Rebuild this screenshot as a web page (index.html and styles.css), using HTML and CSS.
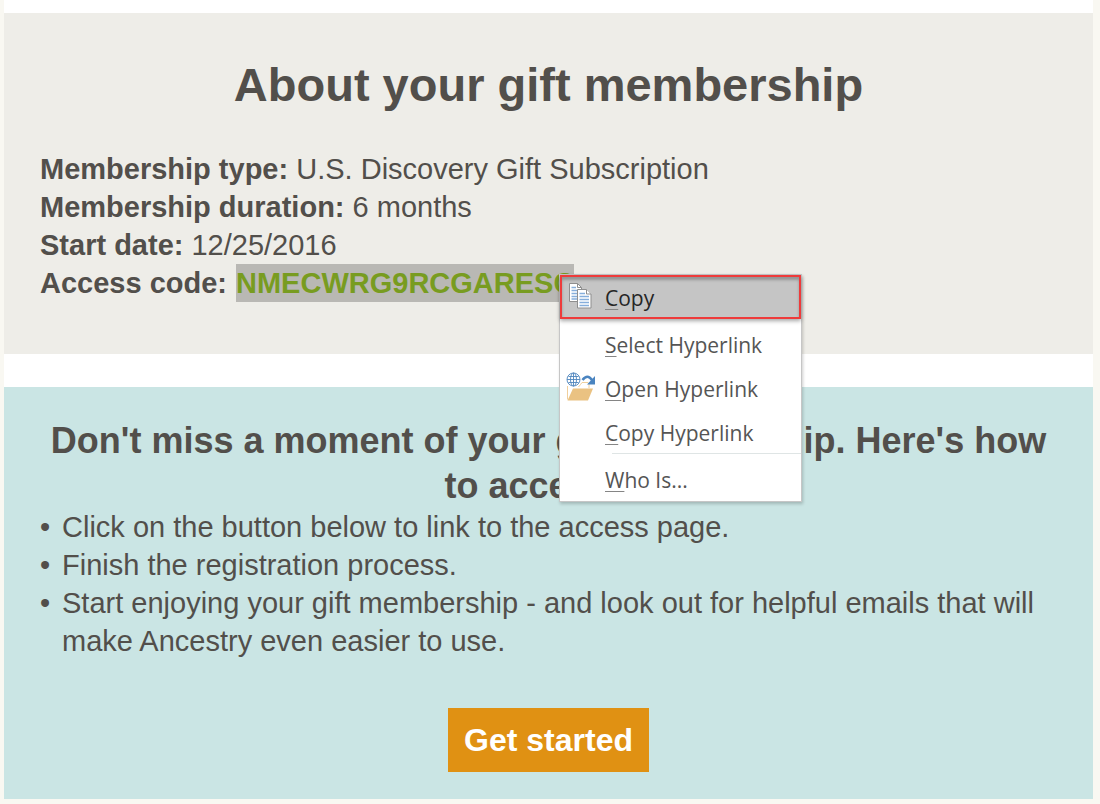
FILE: index.html
```html
<!DOCTYPE html>
<html lang="en">
<head>
    <meta charset="UTF-8">
    <meta name="viewport" content="width=device-width, initial-scale=1.0">
    <title>Your gift membership</title>
    <link rel="stylesheet" href="styles.css">
</head>
<body>
    <main class="email">
        <section class="details">
            <h1>About your gift membership</h1>
            <p><strong>Membership type:</strong> U.S. Discovery Gift Subscription</p>
            <p><strong>Membership duration:</strong> 6 months</p>
            <p><strong>Start date:</strong> 12/25/2016</p>
            <div class="code-row">
                <strong>Access code:</strong>
                <div class="code-wrap">
                    <a class="code" href="#">NMECWRG9RCGARESC</a>

                    <div class="menu" role="menu">
                        <button class="menu-item active" type="button" role="menuitem">
                            <svg class="icon" viewBox="0 0 30 30" aria-hidden="true">
                                <path d="M3.500 2.500h8l4 4v14h-12z" fill="#fff" stroke="#8f8f8f"/>
                                <path d="M11.500 2.500v4h4" fill="none" stroke="#8f8f8f"/>
                                <path d="M5.500 6.500h4.500M5.500 9.500h6M5.500 12.500h6M5.500 15.500h6M5.500 18h6" stroke="#86aedb" stroke-width="1.400"/>
                                <path d="M11.500 8.500h9l4.500 4.500v14h-13.500z" fill="#fff" stroke="#8f8f8f"/>
                                <path d="M20.500 8.500v4.500h4.500" fill="#fff" stroke="#8f8f8f"/>
                                <path d="M13.500 12.500h5.500M13.500 15.500h9.500M13.500 18.500h9.500M13.500 21.500h9.500M13.500 24.500h9.500" stroke="#86aedb" stroke-width="1.400"/>
                            </svg>
                            <span><u>C</u>opy</span>
                        </button>
                        <button class="menu-item" type="button" role="menuitem">
                            <span><u>S</u>elect Hyperlink</span>
                        </button>
                        <button class="menu-item" type="button" role="menuitem">
                            <svg class="icon" viewBox="0 0 30 30" aria-hidden="true">
                                <path d="M1.500 27.500V14M12.500 15l2-2.500 1.500-2h6l1 1.500v4" fill="none" stroke="#f0cf9c"/>
                                <path d="M7 16.500h20l-5 12H1.500z" fill="#eac282"/>
                                <g fill="#fff" stroke="#4f86bd" stroke-width="0.900">
                                    <circle cx="7.500" cy="7.500" r="6.500"/>
                                    <ellipse cx="7.500" cy="7.500" rx="3" ry="6.500"/>
                                    <path d="M7.500 1v13M1 7.500h13M2.500 4.500h10M2.500 10.500h10" fill="none"/>
                                </g>
                                <path d="M16.500 8q5-6.500 9.500 0" fill="none" stroke="#4a84c0" stroke-width="2.600"/>
                                <path d="M29 4v8.500h-8z" fill="#4a84c0"/>
                            </svg>
                            <span><u>O</u>pen Hyperlink</span>
                        </button>
                        <button class="menu-item" type="button" role="menuitem">
                            <span><u>C</u>opy Hyperlink</span>
                        </button>
                        <hr>
                        <button class="menu-item" type="button" role="menuitem">
                            <span><u>W</u>ho Is...</span>
                        </button>
                    </div>
                </div>
            </div>
        </section>

        <section class="steps">
            <h2>Don't miss a moment of your gift membership. Here's how to access it:</h2>
            <ul>
                <li>Click on the button below to link to the access page.</li>
                <li>Finish the registration process.</li>
                <li>Start enjoying your gift membership - and look out for helpful emails that will make Ancestry even easier to use.</li>
            </ul>
            <a class="btn" href="#">Get started</a>
        </section>
    </main>
</body>
</html>
```
FILE: styles.css
```css
* {
    margin: 0;
    padding: 0;
    box-sizing: border-box;
}

body {
    font-family: 'Liberation Sans', Arial, sans-serif;
    font-size: 29px;
    line-height: 38px;
    color: #524f4b;
    background-color: #f9f8f2;
}

.email {
    margin: 0 7px 4px 4px;
    padding-top: 13px;
    background-color: #ffffff;
}

.details {
    padding: 42px 36px 52px;
    background-color: #eeede8;
}

h1 {
    margin-bottom: 35px;
    font-size: 47px;
    line-height: 60px;
    text-align: center;
}

.code-row {
    display: flex;
    gap: 9px;
}

.code-wrap {
    position: relative;
}

.code {
    display: block;
    background-color: #b9b8b4;
    color: #789c20;
    font-weight: bold;
    text-decoration: none;
}

/* Context menu */
.menu {
    position: absolute;
    top: 10px;
    left: 323px;
    z-index: 1;
    width: 243px;
    background-color: #ffffff;
    border: 1px solid #c6c6c6;
    box-shadow: 1px 2px 3px rgba(0, 0, 0, 0.2);
}

.menu-item {
    display: flex;
    align-items: center;
    position: relative;
    width: 100%;
    height: 44px;
    padding: 2px 0 0 45px;
    border: none;
    background: none;
    color: #555555;
    font-family: 'Open Sans', 'Noto Sans', sans-serif;
    font-size: 21px;
    line-height: 28px;
    text-align: left;
    white-space: nowrap;
}

.menu-item u {
    text-decoration-color: #858585;
    text-decoration-thickness: 1px;
    text-underline-offset: 3px;
}

.menu-item.active {
    margin-bottom: 3px;
    padding-left: 43px;
    border: 2px solid #ee3b3b;
    background-color: #c5c5c5;
    color: #262626;
    box-shadow: inset 0 3px 3px rgba(0, 0, 0, 0.25), 0 2px 4px rgba(0, 0, 0, 0.35);
}

.icon {
    position: absolute;
    left: 6px;
    top: 6px;
    width: 30px;
    height: 30px;
}

.active .icon {
    left: 4px;
    top: 4px;
}

.menu hr {
    margin: -1px 0 3px 52px;
    border: none;
    border-top: 1px solid #dfe5e5;
}

.steps {
    margin-top: 33px;
    padding: 31px 36px 27px;
    background-color: #cae5e4;
    text-align: center;
}

h2 {
    font-size: 36px;
    line-height: 45px;
}

ul {
    margin-bottom: 48px;
    list-style: none;
    text-align: left;
}

li {
    display: flex;
}

li::before {
    content: "•";
    flex: 0 0 22px;
}

.btn {
    display: inline-block;
    padding: 13px 16px;
    background-color: #e09113;
    color: #ffffff;
    font-size: 32px;
    font-weight: bold;
    text-decoration: none;
}
```
